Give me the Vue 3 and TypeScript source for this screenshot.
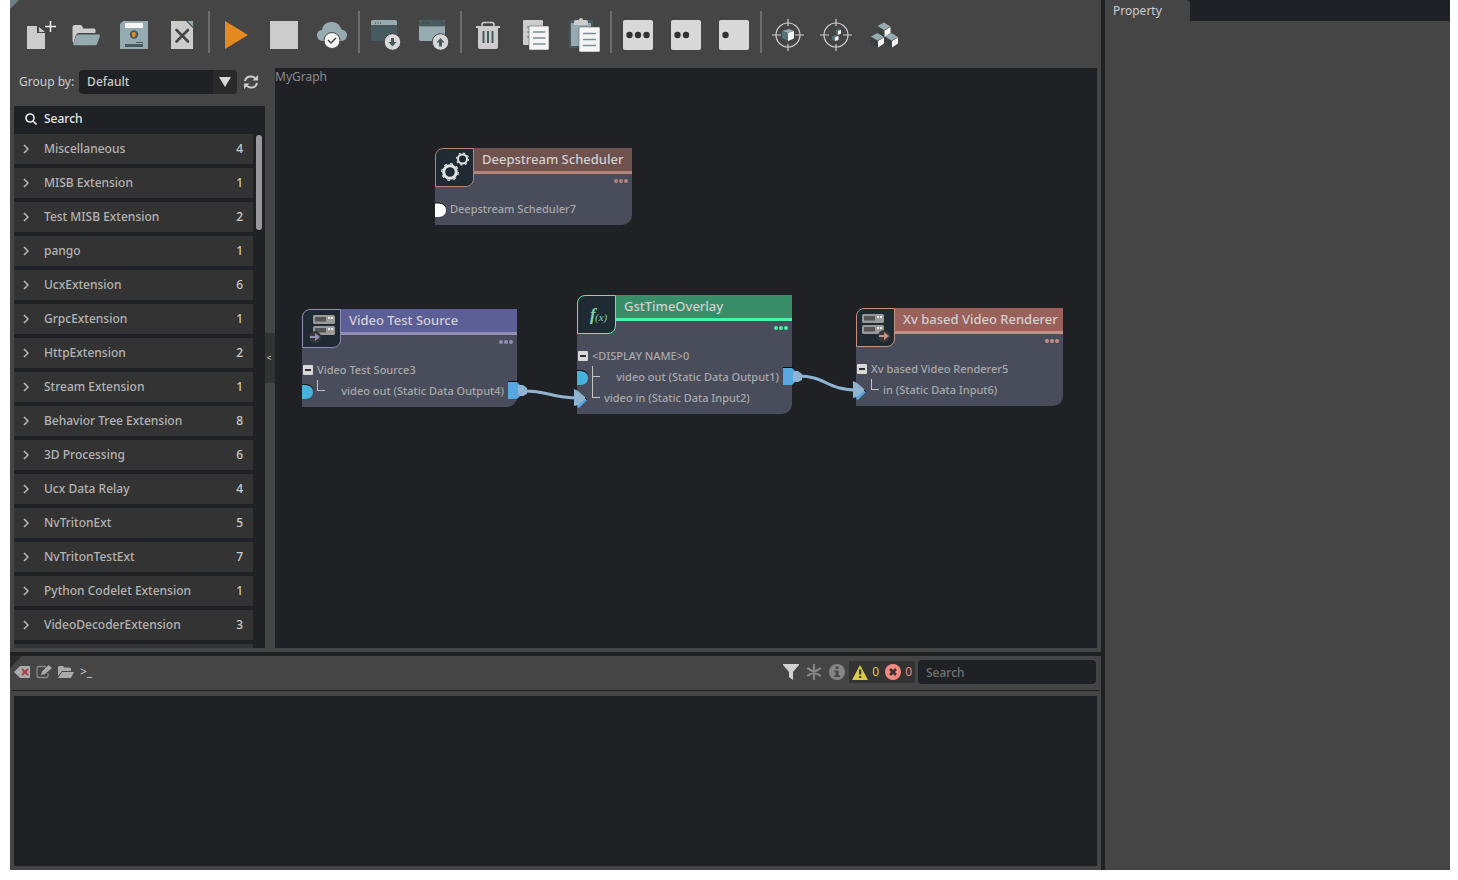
<script setup lang="ts">
import { ref } from 'vue'

interface Group { name: string; count: number }
interface PortRow { kind: 'plain' | 'parent' | 'out' | 'in'; label: string; last?: boolean }
interface GraphNode {
  id: string
  title: string
  x: number
  y: number
  width: number
  theme: string
  icon: 'gears' | 'source' | 'fx' | 'sink'
  rows: PortRow[]
}

const groups: Group[] = [
  { name: 'Miscellaneous', count: 4 },
  { name: 'MISB Extension', count: 1 },
  { name: 'Test MISB Extension', count: 2 },
  { name: 'pango', count: 1 },
  { name: 'UcxExtension', count: 6 },
  { name: 'GrpcExtension', count: 1 },
  { name: 'HttpExtension', count: 2 },
  { name: 'Stream Extension', count: 1 },
  { name: 'Behavior Tree Extension', count: 8 },
  { name: '3D Processing', count: 6 },
  { name: 'Ucx Data Relay', count: 4 },
  { name: 'NvTritonExt', count: 5 },
  { name: 'NvTritonTestExt', count: 7 },
  { name: 'Python Codelet Extension', count: 1 },
  { name: 'VideoDecoderExtension', count: 3 },
]

const tools: string[][] = [
  ['New', 'Open', 'Save', 'Close'],
  ['Play', 'Stop', 'Cloud'],
  ['Import', 'Export'],
  ['Delete', 'Copy', 'Paste'],
  ['Expanded', 'Compact', 'Minimized'],
  ['Focus all', 'Focus selected', 'Layout'],
]

const nodes: GraphNode[] = [
  { id: 'sched', title: 'Deepstream Scheduler', x: 160, y: 80, width: 197, theme: 'brown', icon: 'gears',
    rows: [{ kind: 'plain', label: 'Deepstream Scheduler7' }] },
  { id: 'src', title: 'Video Test Source', x: 27, y: 241, width: 215, theme: 'violet', icon: 'source',
    rows: [{ kind: 'parent', label: 'Video Test Source3' }, { kind: 'out', label: 'video out (Static Data Output4)', last: true }] },
  { id: 'gst', title: 'GstTimeOverlay', x: 302, y: 227, width: 215, theme: 'green', icon: 'fx',
    rows: [
      { kind: 'parent', label: '<DISPLAY NAME>0' },
      { kind: 'out', label: 'video out (Static Data Output1)' },
      { kind: 'in', label: 'video in (Static Data Input2)', last: true },
    ] },
  { id: 'xv', title: 'Xv based Video Renderer', x: 581, y: 240, width: 207, theme: 'red', icon: 'sink',
    rows: [{ kind: 'parent', label: 'Xv based Video Renderer5' }, { kind: 'in', label: 'in (Static Data Input6)', last: true }] },
]

const grouping = ref('Default')
const paletteQuery = ref('')
const logQuery = ref('')
</script>

<template>
  <div class="app">
    <div class="left">
      <section class="editor">
        <span class="corner"></span>
        <div class="toolbar">
          <div v-for="(set, s) in tools" :key="s" class="set">
            <button v-for="t in set" :key="t" class="tool" :aria-label="t">
              <svg viewBox="0 0 48 48" width="48" height="48">
                <g v-if="t === 'New'">
                  <path d="M13 15h10v7h8v16H13z" fill="#ccc" />
                  <path d="M25 16l6 5h-6z" fill="#ccc" />
                  <path d="M36.500 10v11M31 15.500h11" stroke="#f0f0f0" stroke-width="1.500" />
                </g>
                <g v-else-if="t === 'Open'">
                  <path d="M10.500 16q0-2 2-2h6q1.500 0 2 2l.5 1.500h11q1.500 0 1.500 1.500v3H17q-2.500 0-3.500 3L11.500 32q-1-1-1-3z" fill="#ccc" />
                  <path d="M16.500 23.500H37q1.500 0 1 1.500l-3 8q-.5 1.200-2 1.200H12q-1.300 0-.8-1.400l3-8q.5-1.300 2.300-1.300z" fill="#96abb0" />
                </g>
                <g v-else-if="t === 'Save'">
                  <path d="M13 10h25v28H10V13z" fill="#96abb0" />
                  <path d="M15 12h18v5H15z" fill="#f5f5f5" />
                  <circle cx="24" cy="23.500" r="4.200" fill="#465a60" />
                  <path d="M22 22l1-1h2l1 2.500-1 2.500h-2l-1-1z" fill="#e38b22" />
                  <path d="M15 33h18v3H15zM26 31h7v1h-7z" fill="#465a60" />
                </g>
                <g v-else-if="t === 'Close'">
                  <path d="M13 10h15l7 7v21H13z" fill="#ccc" />
                  <path d="M29.500 10H35v6z" fill="#96abb0" />
                  <path d="M29 10l6 6.500" stroke="#465a60" />
                  <path d="M18.500 19l11.500 11.500M30 19L18.500 30.500" stroke="#454545" stroke-width="2.600" stroke-linecap="round" />
                </g>
                <path v-else-if="t === 'Play'" d="M13 10v28l23-14z" fill="#e38b22" />
                <path v-else-if="t === 'Stop'" d="M10 10h28v28H10z" fill="#ccc" />
                <g v-else-if="t === 'Cloud'">
                  <path d="M14 30q-5-1-5-6 0-4.500 5-5 1-7.500 9-8 8-.5 10.500 7.500 5.500 1 5.500 5.500 0 5-5 6z" fill="#96abb0" />
                  <circle cx="24" cy="29.500" r="8" fill="#f5f5f5" stroke="#454545" />
                  <path d="M20 29l3 3 5-5" fill="none" stroke="#454545" stroke-width="1.500" />
                </g>
                <g v-else-if="t === 'Import' || t === 'Export'">
                  <rect x="9" y="9" width="26" height="21" rx="2" :fill="t === 'Import' ? '#465a60' : '#96abb0'" />
                  <path d="M11 9h22q2 0 2 2v3.500H9V11q0-2 2-2z" :fill="t === 'Import' ? '#96abb0' : '#465a60'" />
                  <path d="M9 14.800h26" stroke="#454545" />
                  <path d="M13 12h6" stroke="#2d3c40" stroke-dasharray="1 1.500" />
                  <circle cx="30.500" cy="31" r="8.300" fill="#d8d8d8" stroke="#454545" />
                  <path v-if="t === 'Import'" d="M29 27h3v4h2.500l-4 4.500-4-4.500H29z" fill="#465a60" />
                  <path v-else d="M29 35.500h3v-4h2.500l-4-4.500-4 4.500H29z" fill="#465a60" />
                </g>
                <g v-else-if="t === 'Delete'">
                  <path d="M12 15h24v2H12z" fill="#ccc" />
                  <path d="M18 15v-1q0-2.500 2-2.500h8q2 0 2 2.500v1" fill="none" stroke="#ccc" stroke-width="1.500" />
                  <path d="M14 17h20v19q0 2-2 2H16q-2 0-2-2z" fill="#ccc" />
                  <path d="M19.500 20v12M24 20v12M28.500 20v12" stroke="#465a60" stroke-width="2" />
                </g>
                <g v-else-if="t === 'Copy'">
                  <rect x="11" y="9" width="20" height="25" rx="1" fill="#ccc" />
                  <path d="M15 16h4M15 21h4M15 26h4" stroke="#7b9196" stroke-width="1.500" />
                  <rect x="17" y="15" width="20" height="24" rx="1" fill="#f5f5f5" stroke="#454545" stroke-width=".5" />
                  <path d="M21 21h12.500M21 27h12.500M21 33h12.500" stroke="#7b9196" stroke-width="1.500" />
                </g>
                <g v-else-if="t === 'Paste'">
                  <path d="M9 9h24v28H9z" fill="#465a60" />
                  <path d="M11 12h20v23H11z" fill="#96abb0" />
                  <path d="M14 14v-3q0-2 2-2h3q0-2 2-2t2 2h3q2 0 2 2v3z" fill="#ccc" />
                  <rect x="19" y="16" width="21" height="25" rx="1" fill="#f5f5f5" stroke="#454545" stroke-width=".5" />
                  <path d="M23 22.500h13M23 28.500h13M23 34.500h13" stroke="#7b9196" stroke-width="1.500" />
                </g>
                <g v-else-if="s === 4">
                  <rect x="9" y="9" width="30" height="30" rx="2" fill="#d8d8d8" />
                  <circle cx="15.500" cy="24" r="3.200" fill="#333" />
                  <circle v-if="t !== 'Minimized'" cx="24" cy="24" r="3.200" fill="#333" />
                  <circle v-if="t === 'Expanded'" cx="32.500" cy="24" r="3.200" fill="#333" />
                </g>
                <g v-else-if="t === 'Focus all' || t === 'Focus selected'">
                  <circle cx="24" cy="24" r="12" fill="none" stroke="#ccc" stroke-width="1.200" />
                  <path d="M8 24h9M31 24h9M24 8v7M24 33v7" stroke="#ccc" stroke-width="1.200" />
                  <g v-if="t === 'Focus all'">
                    <path d="M18 20l7-2 5 2-6 2z" fill="#96abb0" />
                    <path d="M18 20l6 2v8l-6-3z" fill="#54727a" />
                    <path d="M24 22l6-2v7.500L24 30z" fill="#f5f5f5" />
                  </g>
                  <g v-else>
                    <path d="M24 19l2.500-1 2.500 1v3.500L26 24l-2-1z" fill="#54727a" />
                    <path d="M26 20l3-1v3.500L26 24z" fill="#f5f5f5" />
                    <path d="M20 25.500l3-1.500 3.500 1v4L23 30l-3-1.500z" fill="#54727a" />
                    <path d="M23 26l3.500-1v4L23 30z" fill="#f5f5f5" />
                  </g>
                </g>
                <g v-else>
                  <g v-for="c in [[24, 12], [17.500, 22.500], [31.500, 22.500]]" :key="c[0]" :transform="`translate(${c[0]} ${c[1]})`">
                    <path d="M-6.500 3L0-.5l6.500 4L0 7z" fill="#96abb0" />
                    <path d="M-6.500 4L0 8v6l-6.500-3.500z" fill="#3a3f41" />
                    <path d="M.5 7.500l6-3.500v6l-6 4z" fill="#f5f5f5" />
                  </g>
                </g>
              </svg>
            </button>
          </div>
        </div>

        <div class="work">
          <aside class="palette">
            <div class="grouping">
              <label for="grouping">Group by:</label>
              <div class="combo">
                <select id="grouping" v-model="grouping"><option>Default</option></select>
                <span class="arrow"><svg width="12" height="10" viewBox="0 0 12 10"><path d="M0 0h12L6 10z" fill="#d8d8d8" /></svg></span>
              </div>
              <button class="refresh" aria-label="Refresh">
                <svg width="14" height="14" viewBox="0 0 14 14" fill="none" stroke="#ccc" stroke-width="2">
                  <path d="M1 6Q2 1.500 7 1.500q3 0 5 2.500M13 8q-1 4.500-6 4.500-3 0-5-2.500" />
                  <path d="M14 0v5.500H8.500zM0 14V8.500h5.500z" fill="#ccc" stroke="none" />
                </svg>
              </button>
            </div>
            <div class="panel">
              <label class="find">
                <svg width="12" height="12" viewBox="0 0 12 12" fill="none" stroke="#e6e6e6" stroke-width="1.700"><circle cx="5" cy="5" r="4" /><path d="M8 8l3.500 3.500" /></svg>
                <input v-model="paletteQuery" type="text" placeholder="Search" aria-label="Search extensions" />
              </label>
              <div class="scroller">
                <div class="list">
                  <button v-for="g in groups" :key="g.name" class="group">
                    <svg width="6" height="10" viewBox="0 0 6 10"><path d="M1 1l4 4-4 4" fill="none" stroke="#bbb" stroke-width="1.500" /></svg>
                    <span class="name">{{ g.name }}</span>
                    <span class="count">{{ g.count }}</span>
                  </button>
                  <div class="group"></div>
                </div>
                <div class="track"><div class="thumb"></div></div>
              </div>
            </div>
          </aside>

          <div class="gutter"><button class="fold" aria-label="Collapse palette">&lt;</button></div>

          <main class="canvas">
            <span class="graph-name">MyGraph</span>
            <article
              v-for="n in nodes"
              :key="n.id"
              class="node"
              :class="n.theme"
              :style="{ left: n.x + 'px', top: n.y + 'px', width: n.width + 'px' }"
            >
              <header>{{ n.title }}</header>
              <span class="badge">
                <svg v-if="n.icon === 'gears'" width="37" height="37" viewBox="0 0 37 37" fill="none" stroke="#dfe3e2">
                  <circle cx="14" cy="23" r="6.300" stroke-width="3" />
                  <circle cx="14" cy="23" r="8.300" stroke-width="1.300" stroke-dasharray="3 3.500" />
                  <circle cx="26.500" cy="10" r="4.500" stroke-width="2" />
                  <circle cx="26.500" cy="10" r="6" stroke-width="1.200" stroke-dasharray="2 2.700" />
                </svg>
                <svg v-else-if="n.icon === 'fx'" width="37" height="37" viewBox="0 0 37 37">
                  <text x="12" y="24" class="fx-big">f</text>
                  <text x="17" y="25" class="fx-small">(x)</text>
                </svg>
                <svg v-else width="37" height="37" viewBox="0 0 37 37">
                  <g :transform="n.icon === 'source' ? 'translate(10 5)' : 'translate(5 5)'">
                    <g v-for="y in [0, 11]" :key="y" :transform="`translate(0 ${y})`">
                      <rect width="22" height="9" rx="1.500" fill="#999" />
                      <rect x="2" y="2" width="11" height="4.500" fill="#555" />
                      <path d="M15 2h2v2h-2zM18 2h2v2h-2z" fill="#eee" />
                    </g>
                  </g>
                  <g :transform="n.icon === 'source' ? 'translate(12 27)' : 'translate(27 27)'">
                    <circle r="6" fill="#383838" />
                    <path d="M-5-1H0v-3l5 4-5 4V1h-5z" class="accent" />
                  </g>
                </svg>
              </span>
              <button class="more" aria-label="More"><i></i><i></i><i></i></button>
              <div class="rows">
                <div v-for="r in n.rows" :key="r.label" class="row" :class="[r.kind, { last: r.last }]">
                  <span v-if="r.kind === 'parent'" class="toggle"></span>
                  <span v-if="r.kind === 'out' || r.kind === 'in'" class="branch"></span>
                  <span class="label">{{ r.label }}</span>
                </div>
              </div>
            </article>

            <svg class="wires" width="822" height="580" viewBox="0 0 822 580">
              <path d="M160 135h4q7 1 7 7t-7 7h-4z" fill="#fff" />
              <path d="M160 135h4q5 0 7 4" fill="none" stroke="#111" />
              <g fill="#46b3dc">
                <path d="M27 317h4q7 1 7 7t-7 7h-4z" />
                <path d="M302 303h4q7 1 7 7t-7 7h-4z" />
              </g>
              <path d="M27 316.500h4q5 0 7 4M302 302.500h4q5 0 7 4" fill="none" stroke="#111" />
              <path d="M248 323c24-1 26 7 56 7M523 308c28 0 28 14 60 14" fill="none" stroke="#8fb3d0" stroke-width="3" />
              <g v-for="p in [[233, 314], [508, 300]]" :key="p[0]" :transform="`translate(${p[0]} ${p[1]})`">
                <path d="M0 0h9l3 3v11l-3 3H0z" fill="#57a7e0" />
                <path d="M0-.5h10" stroke="#111" />
                <path d="M10 4l2-1h3l4 3v6l-4 2h-3l-2-1z" fill="#8fb3d0" />
              </g>
              <g v-for="p in [[299, 330], [578, 322]]" :key="p[0]" :transform="`translate(${p[0]} ${p[1]})`">
                <path d="M4 6l7-6 2 2-8 8-2-1z" fill="#57a7e0" />
                <path d="M11 0l2 2" stroke="#111" />
                <path d="M0-9l4 2 7 6v2L4 7 0 8z" fill="#8fb3d0" />
              </g>
            </svg>
          </main>
        </div>
      </section>

      <section class="log">
        <div class="logbar">
          <div class="actions">
            <button aria-label="Clear log">
              <svg width="16" height="12" viewBox="0 0 16 12"><path d="M0 6l6-6h10v12H6z" fill="#aaa" /><path d="M8 3l6 6M14 3L8 9" stroke="#a84444" stroke-width="2.300" /></svg>
            </button>
            <button aria-label="Edit log">
              <svg width="16" height="14" viewBox="0 0 16 14"><path d="M10 1.500H3Q1 1.500 1 3.500v7q0 2 2 2h7q2 0 2-2V8" fill="none" stroke="#888" stroke-width="1.300" /><path d="M5 10l1-3.500L12.500 0 16 3 8.500 9.500z" fill="#aaa" /></svg>
            </button>
            <button aria-label="Open log folder">
              <svg width="16" height="12" viewBox="0 0 16 12"><path d="M0 10V1l1-1h4l1 1.500h6l1 1V5H4z" fill="#aaa" /><path d="M4 6h12l-3 6H0z" fill="#aaa" /></svg>
            </button>
            <button class="prompt" aria-label="Command line">&gt;_</button>
          </div>
          <div class="filters">
            <button aria-label="Filter"><svg width="16" height="16" viewBox="0 0 16 16"><path d="M0 0h16v1l-6 7v8l-4-3V8L0 1z" fill="#d0d0d0" /></svg></button>
            <button aria-label="Verbose"><svg width="16" height="16" viewBox="0 0 16 16"><path d="M8 1v14M2 4.500l12 7M14 4.500l-12 7" stroke="#858585" stroke-width="2.200" stroke-linecap="round" /></svg></button>
            <button aria-label="Info"><svg width="16" height="16" viewBox="0 0 16 16"><circle cx="8" cy="8" r="8" fill="#858585" /><path d="M6.500 2.500h3v2.500h-3zM5.500 6.500h4v5H11V13H5v-1.500h1.500V8h-1z" fill="#454545" /></svg></button>
            <div class="levels">
              <button class="warn"><svg width="16" height="15" viewBox="0 0 16 15"><path d="M8 0l8 15H0z" fill="#dccb45" /><path d="M7 4.500h2.200v5H7zM7 11h2.200v2H7z" fill="#333" /></svg>0</button>
              <button class="error"><svg width="16" height="16" viewBox="0 0 16 16"><circle cx="8" cy="8" r="8" fill="#f58a80" /><path d="M5 5l6 6M11 5l-6 6" stroke="#333" stroke-width="2.600" /></svg>0</button>
            </div>
            <input v-model="logQuery" class="log-search" type="text" placeholder="Search" aria-label="Search log" />
          </div>
        </div>
        <div class="output"></div>
      </section>
    </div>

    <section class="property">
      <div class="tabs"><button class="tab">Property</button></div>
    </section>
  </div>
</template>

<style>
body { background: #fff; }
</style>

<style scoped>
.app {
  box-sizing: border-box;
  height: calc(100vh - 10px);
  margin: 0 8px 10px 10px;
  display: flex;
  gap: 4px;
  background: #1f2124;
  color: #ccc;
  font: 500 12px/18px "Noto Sans", "Open Sans", sans-serif;
}
button, input, select { font: inherit; color: inherit; border: 0; padding: 0; margin: 0; background: none; outline: 0; }
svg { display: block; flex: none; }

.left { flex: 1; min-width: 0; display: flex; flex-direction: column; gap: 4px; }
.editor { position: relative; flex: 1; min-height: 0; display: flex; flex-direction: column; background: #454545; padding: 0 4px 4px; }
.corner { position: absolute; left: 0; top: 0; border-top: 9px solid #6f8084; border-right: 9px solid transparent; }

.toolbar { display: flex; height: 48px; padding: 11px 0 9px; }
.set { display: flex; }
.set + .set::before { content: ""; width: 2px; height: 42px; margin: 0 2px; background: #6c6c6c; }
.tool { width: 48px; height: 48px; }

.work { flex: 1; min-height: 0; display: flex; }
.palette { flex: none; width: 251px; display: flex; flex-direction: column; }
.grouping { display: flex; align-items: center; height: 24px; padding: 2px 7px 12px 5px; }
.grouping label { font-weight: 400; }
.combo { position: relative; flex: 1; height: 24px; margin: 0 7px 0 5px; }
.combo select { appearance: none; width: 100%; height: 24px; padding: 0 8px; border-radius: 4px; background: #1f2124; }
.arrow { position: absolute; right: 0; top: 0; width: 24px; height: 24px; display: grid; place-items: center; background: #2a2a2a; border-radius: 0 4px 4px 0; pointer-events: none; }

.panel { flex: 1; min-height: 0; display: flex; flex-direction: column; background: #1f2124; }
.find { display: flex; align-items: center; gap: 7px; height: 26px; padding: 0 11px 2px; color: #e6e6e6; }
.find input { flex: 1; min-width: 0; }
.find input::placeholder { color: #e6e6e6; opacity: 1; }
.scroller { flex: 1; min-height: 0; display: flex; overflow: hidden; }
.list { flex: 1; display: flex; flex-direction: column; gap: 4px; }
.group { display: flex; align-items: center; flex: none; height: 30px; padding: 0 10px 0 9px; background: #333; text-align: left; color: #b4b4b4; }
.name { flex: 1; margin-left: 15px; }
.count { color: #ccc; }
.track { width: 12px; }
.thumb { width: 6px; height: 95px; margin: 1px 3px; border-radius: 3px; background: #999; }

.gutter { flex: none; width: 10px; display: flex; align-items: center; }
.fold { width: 10px; height: 50px; padding-right: 2px; background: #333; color: #ccc; font-size: 8px; line-height: 10px; }

.canvas { position: relative; flex: 1; min-width: 0; overflow: hidden; background: #1f2124; }
.graph-name { display: block; color: #8a8a8a; font-weight: 400; }
.wires { position: absolute; left: 0; top: 0; pointer-events: none; }

.node { position: absolute; border-radius: 0 0 10px 0; background: #494d5b; padding-bottom: 6px; color: #a8a8a8; }
.node header { box-sizing: border-box; height: 26px; margin-left: 6px; padding-left: 41px; border-bottom: 3px solid var(--line); background: var(--head); color: #d2cfd0; font-size: 13px; line-height: 23px; white-space: nowrap; }
.badge { position: absolute; left: 0; top: 0; width: 37px; height: 37px; border: 1px solid var(--line); border-radius: 8px 0 8px 0; background: #1f2a32; }
.node::before { content: ""; position: absolute; left: 0; top: 0; width: 8px; height: 8px; background: #1f2124; }
.accent { fill: var(--line); }
.fx-big { font: italic bold 17px "Liberation Serif", serif; fill: #7cd6ae; }
.fx-small { font: italic 11px "Liberation Serif", serif; fill: #7cd6ae; }
.more { display: flex; gap: 1px; height: 4px; padding: 5px 4px 0 0; box-sizing: content-box; margin-left: auto; }
.more i { width: 4px; height: 4px; border-radius: 2px; background: var(--line); }
.brown { --head: #6f514d; --line: #b58478; }
.violet { --head: #5c5e96; --line: #8f8db4; }
.green { --head: #388e69; --line: #46f5a5; }
.red { --head: #99615a; --line: #c49184; }

.rows { margin-top: 15px; font-size: 11px; line-height: 21px; white-space: nowrap; }
.row { display: flex; align-items: center; height: 21px; }
.plain { padding-left: 15px; }
.toggle { box-sizing: border-box; width: 10px; height: 10px; margin: 0 4px 0 1px; border: solid #d8d8d8; border-width: 4px 2px; border-radius: 1px; background: #333; }
.branch { position: relative; align-self: stretch; width: 8px; margin-left: 15px; }
.branch::before { content: ""; position: absolute; left: 0; top: 0; width: 7px; height: 10px; border: solid #c4c4c4; border-width: 0 0 1px 1px; }
.branch::after { content: ""; position: absolute; left: 0; top: 0; width: 1px; height: 21px; background: #c4c4c4; }
.last .branch::after { display: none; }
.out { justify-content: space-between; padding-right: 13px; }
.in .label { margin-left: 4px; }

.log { position: relative; background: #454545; padding: 0 4px 4px; }
.log::before { content: ""; position: absolute; left: 0; top: 0; border-top: 12px solid #2b2b2b; border-right: 12px solid transparent; }
.logbar { position: relative; display: flex; justify-content: space-between; align-items: center; height: 32px; padding-bottom: 2px; margin: 0 -2px 5px; border-bottom: 1px solid #1f2124; }
.actions { display: flex; align-items: center; gap: 6px; margin-left: 2px; }
.prompt { font-weight: 400; }
.filters { display: flex; align-items: center; gap: 7px; margin-right: 3px; }
.levels { display: flex; align-items: center; gap: 6px; height: 22px; padding: 0 3px; margin: 0 -4px 0 -3px; background: #333; font-weight: 400; }
.levels button { display: flex; align-items: center; gap: 4px; }
.warn { color: #dccb45; }
.error { color: #f58a80; }
.log-search { width: 162px; height: 24px; padding: 0 8px; border-radius: 4px; background: #1f2124; }
.log-search::placeholder { color: #737373; opacity: 1; }
.output { height: 170px; background: #1f2124; }

.property { width: 345px; background: #454545; }
.tabs { display: flex; background: #1f2126; }
.tab { width: 85px; height: 21px; padding-left: 8px; border-radius: 0 4px 0 0; background: #454545; text-align: left; font-weight: 400; }
</style>
